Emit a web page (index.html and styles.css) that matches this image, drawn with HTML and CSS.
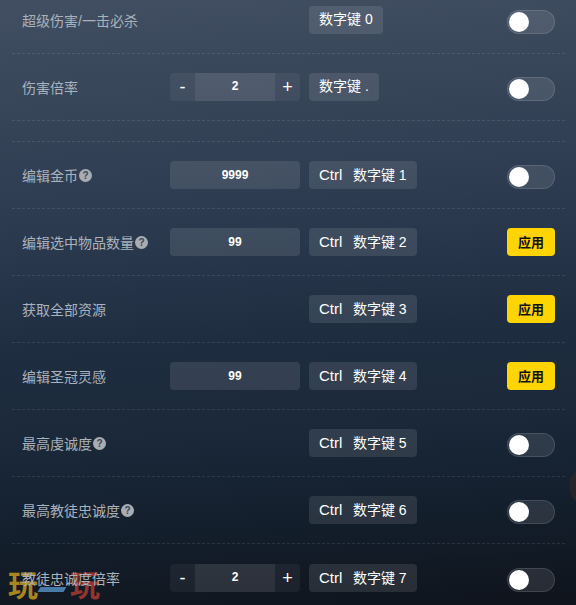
FILE: index.html
```html
<!DOCTYPE html>
<html lang="en">
<head>
    <meta charset="UTF-8">
    <meta name="viewport" content="width=device-width, initial-scale=1.0">
    <title>Trainer</title>
    <link rel="stylesheet" href="styles.css">
</head>
<body>
    <div class="panel">
        <div class="edge-dot"></div>
        <div class="watermark"><span class="wm-a">玩</span><span class="wm-dash"></span><span class="wm-b">玩</span></div>
        <div class="list">
            <div class="row">
                <div class="name">超级伤害/一击必杀</div>
                <div class="control"></div>
                <div class="keys"><span class="key">数字键 0</span></div>
                <div class="action"><span class="switch"><i></i></span></div>
            </div>
            <div class="row">
                <div class="name">伤害倍率</div>
                <div class="control stepper"><span class="step">-</span><span class="value">2</span><span class="step">+</span></div>
                <div class="keys"><span class="key">数字键 .</span></div>
                <div class="action"><span class="switch"><i></i></span></div>
            </div>
            <div class="spacer"></div>
            <div class="row">
                <div class="name">编辑金币<span class="help">?</span></div>
                <div class="control field">9999</div>
                <div class="keys"><span class="key"><b>Ctrl</b>数字键 1</span></div>
                <div class="action"><span class="switch"><i></i></span></div>
            </div>
            <div class="row">
                <div class="name">编辑选中物品数量<span class="help">?</span></div>
                <div class="control field">99</div>
                <div class="keys"><span class="key"><b>Ctrl</b>数字键 2</span></div>
                <div class="action"><button class="apply">应用</button></div>
            </div>
            <div class="row">
                <div class="name">获取全部资源</div>
                <div class="control"></div>
                <div class="keys"><span class="key"><b>Ctrl</b>数字键 3</span></div>
                <div class="action"><button class="apply">应用</button></div>
            </div>
            <div class="row">
                <div class="name">编辑圣冠灵感</div>
                <div class="control field">99</div>
                <div class="keys"><span class="key"><b>Ctrl</b>数字键 4</span></div>
                <div class="action"><button class="apply">应用</button></div>
            </div>
            <div class="row">
                <div class="name">最高虔诚度<span class="help">?</span></div>
                <div class="control"></div>
                <div class="keys"><span class="key"><b>Ctrl</b>数字键 5</span></div>
                <div class="action"><span class="switch"><i></i></span></div>
            </div>
            <div class="row">
                <div class="name">最高教徒忠诚度<span class="help">?</span></div>
                <div class="control"></div>
                <div class="keys"><span class="key"><b>Ctrl</b>数字键 6</span></div>
                <div class="action"><span class="switch"><i></i></span></div>
            </div>
            <div class="row">
                <div class="name">教徒忠诚度倍率</div>
                <div class="control stepper"><span class="step">-</span><span class="value">2</span><span class="step">+</span></div>
                <div class="keys"><span class="key"><b>Ctrl</b>数字键 7</span></div>
                <div class="action"><span class="switch"><i></i></span></div>
            </div>
        </div>
    </div>
</body>
</html>
```

FILE: styles.css
```css
* {
    box-sizing: border-box;
}
html, body {
    margin: 0;
    height: 100%;
}
body {
    font-family: "Liberation Sans", Arial, "Noto Sans CJK SC", sans-serif;
    overflow: hidden;
}
.panel {
    position: relative;
    height: 605px;
    overflow: hidden;
    background: linear-gradient(176deg, #424f62 0%, #2c3b50 35%, #1f2d41 55%, #1a2839 70%, #131e2b 85%, #0f141c 100%);
}
.list {
    position: relative;
    margin-top: -13px;
    padding: 0 11px 0 12px;
}
.row {
    display: flex;
    align-items: center;
    height: 67px;
    padding: 0 10px;
    border-bottom: 1px dashed rgba(255,255,255,0.1);
}
.row:last-child {
    border-bottom: none;
}
.spacer {
    height: 21px;
    border-bottom: 1px dashed rgba(255,255,255,0.1);
}
.name {
    width: 148px;
    display: flex;
    align-items: center;
    font-size: 14px;
    color: #aab2bb;
    white-space: nowrap;
}
.help {
    width: 13px;
    height: 13px;
    margin-left: 1px;
    border-radius: 50%;
    background: #a9adb3;
    color: #3a4656;
    font-size: 10px;
    font-weight: bold;
    line-height: 13px;
    text-align: center;
}
.control {
    width: 130px;
    height: 28px;
    margin-right: 9px;
}
.field {
    border-radius: 4px;
    background: rgba(255,255,255,0.1);
    color: #fff;
    font-size: 12px;
    font-weight: bold;
    line-height: 28px;
    text-align: center;
}
.stepper {
    display: flex;
    border-radius: 4px;
    overflow: hidden;
    background: rgba(255,255,255,0.05);
    color: #fff;
}
.step {
    width: 25px;
    font-size: 18px;
    line-height: 28px;
    text-align: center;
}
.value {
    flex: 1;
    background: rgba(255,255,255,0.07);
    font-size: 12px;
    font-weight: bold;
    line-height: 26px;
    text-align: center;
}
.keys {
    flex: 1;
}
.key {
    display: inline-block;
    height: 28px;
    padding: 0 10px;
    border-radius: 4px;
    background: rgba(255,255,255,0.1);
    color: #fff;
    font-size: 14px;
    line-height: 27px;
}
.key b {
    font-size: 15px;
    font-weight: normal;
    margin-right: 10.6px;
}
.action {
    display: flex;
    align-items: center;
}
.switch {
    display: block;
    width: 48px;
    height: 24px;
    margin-top: 4px;
    padding: 1px;
    border: 1px solid rgba(255,255,255,0.12);
    border-radius: 12px;
    background: rgba(255,255,255,0.1);
}
.switch i {
    display: block;
    width: 20px;
    height: 20px;
    border-radius: 50%;
    background: #fff;
}
.apply {
    width: 48px;
    height: 28px;
    padding: 0 0 2px;
    border: none;
    border-radius: 4px;
    background: #ffd400;
    color: #111;
    font-family: inherit;
    font-size: 13px;
    font-weight: bold;
}
.edge-dot {
    position: absolute;
    top: 466px;
    right: -33px;
    width: 40px;
    height: 40px;
    border-radius: 50%;
    background: rgba(60,45,35,0.45);
}
.watermark {
    position: absolute;
    left: 8px;
    bottom: 3px;
    display: flex;
    align-items: flex-end;
    font-family: "Liberation Serif", "Noto Sans CJK SC", serif;
    font-size: 30px;
    font-weight: bold;
    line-height: 32px;
}
.wm-a {
    color: #a8861f;
}
.wm-b {
    margin-left: 5px;
    color: #93342f;
}
.wm-dash {
    width: 26px;
    height: 5px;
    margin: 0 0 10px 1px;
    background: #4a7ba8;
    transform: skewX(-30deg);
}
```
